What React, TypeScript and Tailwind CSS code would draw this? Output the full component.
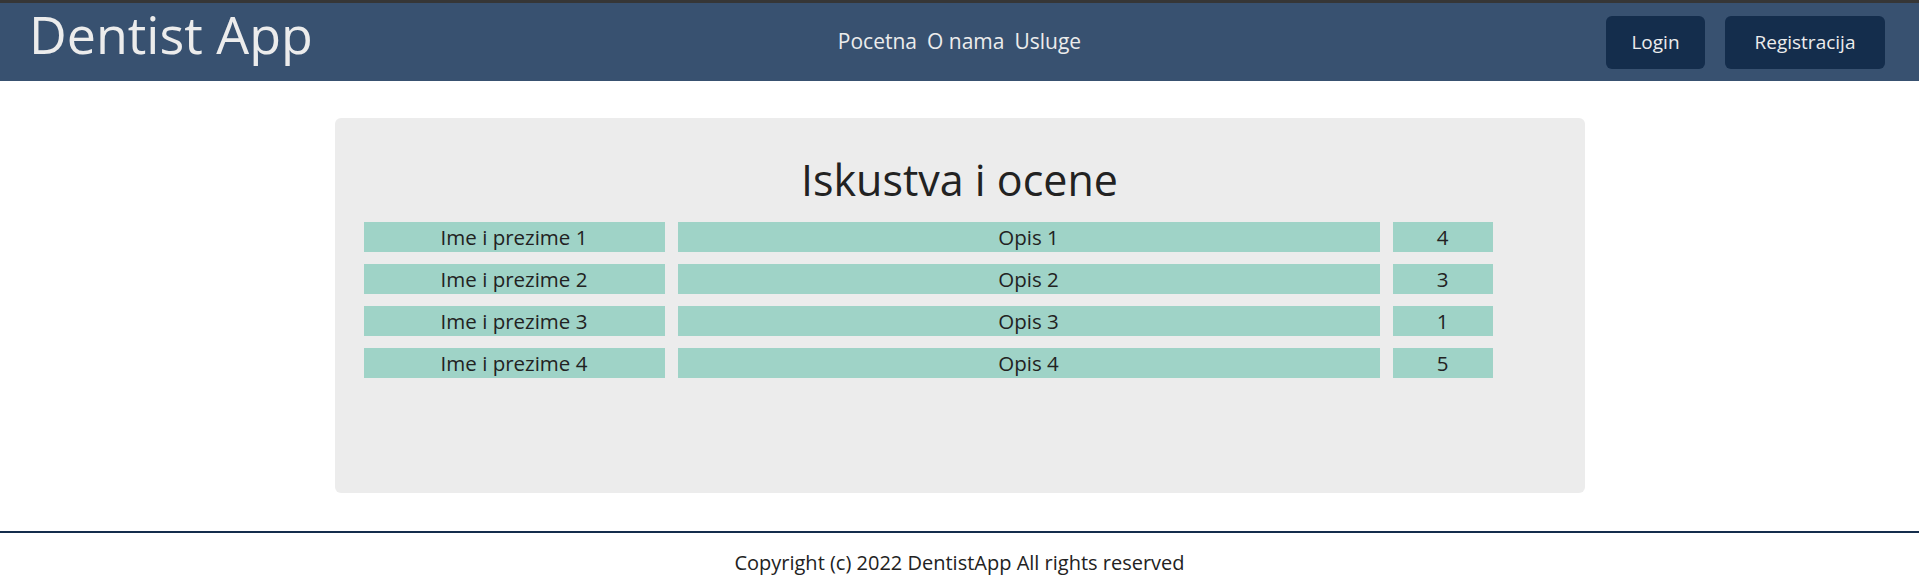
import React from "react";

const rows = [
  { name: "Ime i prezime 1", opis: "Opis 1", ocena: "4" },
  { name: "Ime i prezime 2", opis: "Opis 2", ocena: "3" },
  { name: "Ime i prezime 3", opis: "Opis 3", ocena: "1" },
  { name: "Ime i prezime 4", opis: "Opis 4", ocena: "5" },
];

export default function App() {
  return (
    <div className="min-h-[583px] bg-white font-['Open_Sans',sans-serif]">
      <header className="grid h-[81px] grid-cols-[1fr_auto_1fr] items-center border-t-[3px] border-[#363636] bg-[#385170]">
        <div className="self-start pl-[29px] pt-[5px] text-[52px] leading-[51px] text-[#ececec]">
          Dentist App
        </div>
        <nav className="flex items-center gap-[10px] text-[21px] text-[#ececec]">
          <a>Pocetna</a>
          <a>O nama</a>
          <a>Usluge</a>
        </nav>
        <div className="flex items-center justify-end gap-[20px] pr-[34px]">
          <button className="h-[53px] w-[99px] rounded-[6px] bg-[#142d4c] text-[19px] text-[#ececec]">
            Login
          </button>
          <button className="h-[53px] w-[160px] rounded-[6px] bg-[#142d4c] text-[19px] text-[#ececec]">
            Registracija
          </button>
        </div>
      </header>

      <main className="flex justify-center pt-[37px]">
        <section className="h-[375px] w-[1250px] rounded-[6px] bg-[#ececec] pl-[29px] pt-[30px]">
          <h1 className="pr-[29px] text-center text-[43px] text-[#222]">Iskustva i ocene</h1>
          <div className="mt-[9px] grid grid-cols-[301px_702px_100px] gap-x-[13px] gap-y-[12.33px]">
            {rows.map((r) => (
              <React.Fragment key={r.name}>
                <div className="h-[30px] bg-[#9fd3c7] text-center text-[20.5px] leading-[30px] text-[#222]">{r.name}</div>
                <div className="h-[30px] bg-[#9fd3c7] text-center text-[20.5px] leading-[30px] text-[#222]">{r.opis}</div>
                <div className="h-[30px] bg-[#9fd3c7] text-center text-[20.5px] leading-[30px] text-[#222]">{r.ocena}</div>
              </React.Fragment>
            ))}
          </div>
        </section>
      </main>

      <footer className="mt-[38px] border-t-2 border-[#142d4c] pt-[15px] text-center text-[20px] text-[#222]">
        Copyright (c) 2022 DentistApp All rights reserved
      </footer>
    </div>
  );
}
